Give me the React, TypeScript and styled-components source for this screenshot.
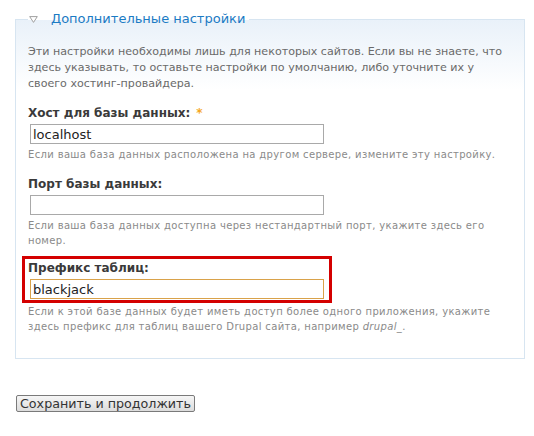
import React, { FC } from "react";
import styled, { createGlobalStyle } from "styled-components";

const GlobalStyle = createGlobalStyle`
  body {
    margin: 0;
    background: #fff;
    font-family: "DejaVu Sans", Verdana, sans-serif;
  }
`;

interface ItemProps {
  label: string;
  required?: boolean;
  value?: string;
  highlighted?: boolean;
  children: React.ReactNode;
}

const FormItem: FC<ItemProps> = ({ label, required, value, highlighted, children }) => {
  return (
    <Item>
      <Highlight $on={!!highlighted}>
        <Label>
          {label}
          {required && <Star>*</Star>}
        </Label>
        <Input defaultValue={value} $focused={!!highlighted} />
      </Highlight>
      <Description>{children}</Description>
    </Item>
  );
};

export default function App() {
  return (
    <Page>
      <GlobalStyle />
      <Fieldset>
        <Legend>
          <svg width="9" height="7" viewBox="0 0 9 7">
            <path d="M0.7 0.6 H8.3 L4.5 6.4 Z" fill="#fff" stroke="#a0a0a0" strokeWidth="1" />
          </svg>
          <LegendText>Дополнительные настройки</LegendText>
        </Legend>
        <Intro>
          Эти настройки необходимы лишь для некоторых сайтов. Если вы не знаете, что
          здесь указывать, то оставьте настройки по умолчанию, либо уточните их у
          своего хостинг-провайдера.
        </Intro>
        <FormItem label="Хост для базы данных:" required value="localhost">
          Если ваша база данных расположена на другом сервере, измените эту настройку.
        </FormItem>
        <FormItem label="Порт базы данных:">
          Если ваша база данных доступна через нестандартный порт, укажите здесь его
          номер.
        </FormItem>
        <FormItem label="Префикс таблиц:" value="blackjack" highlighted>
          Если к этой базе данных будет иметь доступ более одного приложения, укажите
          здесь префикс для таблиц вашего Drupal сайта, например <em>drupal_</em>.
        </FormItem>
      </Fieldset>
      <Submit type="button">Сохранить и продолжить</Submit>
    </Page>
  );
}

const Page = styled.div`
  padding: 11px 0 0 15px;
  width: 510px;
`;

const Fieldset = styled.fieldset`
  margin: 0;
  padding: 0 12px 10px 12px;
  border: 1px solid #d7e5f1;
  background: linear-gradient(#e9f1f9 0, #fff 70px);
  min-width: 0;
`;

const Legend = styled.legend`
  padding: 0 4px 0 1px;
  display: flex;
  align-items: center;
  height: 16px;
  line-height: 16px;
`;

const LegendText = styled.span`
  margin-left: 13px;
  font-size: 13px;
  color: #1b7bc4;
`;

const Intro = styled.p`
  margin: 17px 0 13px 0;
  font-size: 11.1px;
  line-height: 16px;
  color: #6a6a6a;
`;

const Item = styled.div`
  margin-bottom: 14px;
`;

const Highlight = styled.div<{ $on: boolean }>`
  width: 300px;
  margin: ${p => (p.$on ? "-6px 0 -2px -6px" : "0")};
  padding: ${p => (p.$on ? "1px 1px 1px 3px" : "0")};
  border: ${p => (p.$on ? "3px solid #d40000" : "none")};
`;

const Label = styled.label`
  display: block;
  font-size: 12px;
  font-weight: bold;
  line-height: 16px;
  color: #3a3a3a;
  margin-bottom: 3px;
`;

const Star = styled.span`
  color: #f5a623;
  margin-left: 6px;
  font-size: 12px;
`;

const Input = styled.input<{ $focused: boolean }>`
  display: block;
  box-sizing: border-box;
  margin-left: 2px;
  width: 294px;
  height: 20px;
  padding: 0 2px;
  font-family: "DejaVu Sans", Verdana, sans-serif;
  font-size: 13px;
  color: #222;
  background: #fff;
  border: 1px solid ${p => (p.$focused ? "#d9a24a" : "#a9a9a9")};
  outline: none;
`;

const Description = styled.div`
  margin-top: 3px;
  font-size: 10px;
  line-height: 15px;
  color: #8a8a8a;
  letter-spacing: 0.35px;

  em {
    font-style: italic;
  }
`;

const Submit = styled.button`
  display: block;
  margin-top: 36px;
  margin-left: 1px;
  height: 17px;
  padding: 0 3px;
  font-family: "DejaVu Sans", Verdana, sans-serif;
  font-size: 12.7px;
  line-height: 14px;
  color: #333;
  border: 1px solid #7a7a7a;
  border-radius: 2px;
  background: linear-gradient(#f6f6f6, #dcdcdc);
`;
